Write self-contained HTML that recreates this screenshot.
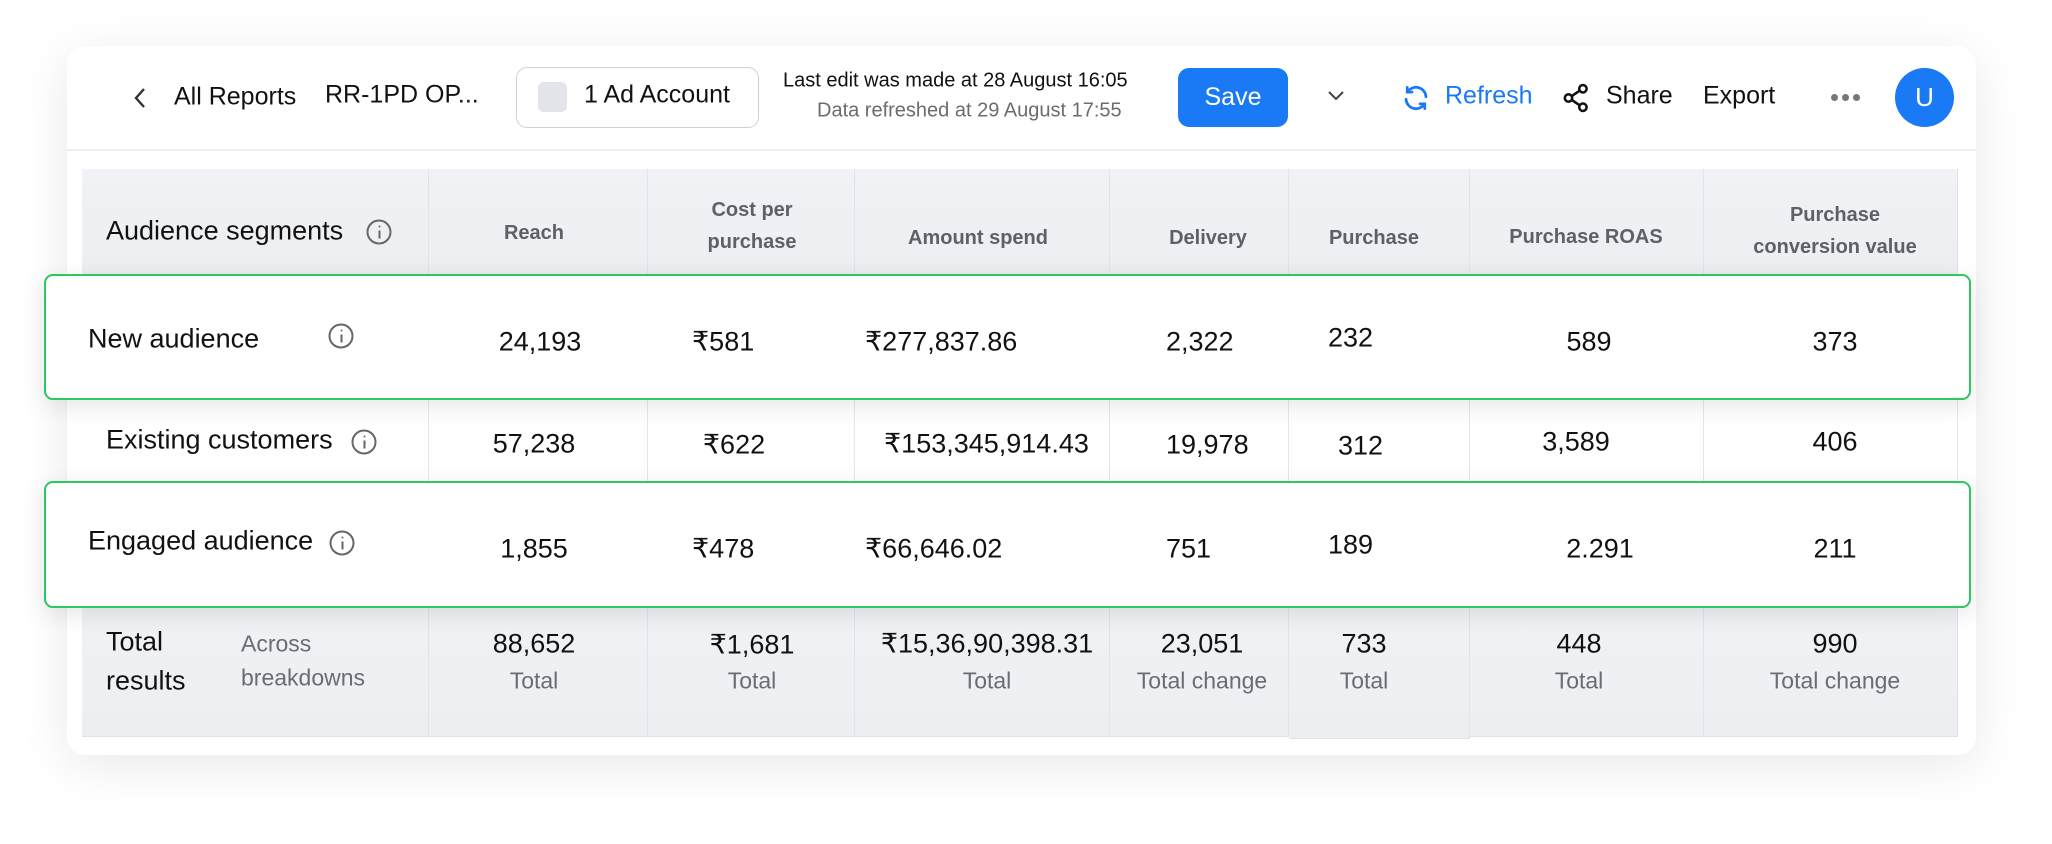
<!DOCTYPE html>
<html><head><meta charset="utf-8"><style>
*{margin:0;padding:0;box-sizing:border-box}
body{width:2052px;height:844px;background:#fff;font-family:"Liberation Sans",Arial,sans-serif;position:relative;overflow:hidden;color:#111}
.a{position:absolute;white-space:nowrap}
.c{transform:translate(-50%,-50%);text-align:center}
.l{transform:translateY(-50%)}
.card{position:absolute;left:67px;top:46px;width:1909px;height:709px;background:#fff;border-radius:18px;box-shadow:0 10px 50px rgba(0,0,0,0.09)}
.hd{position:absolute;background:linear-gradient(#f1f2f6,#eceef2);border-right:1.5px solid #e2e3e8}
.col{position:absolute;border-right:1.5px solid #e6e7eb}
.th{font-size:20px;font-weight:bold;color:#5f6066;line-height:32px}
.v{font-size:27px;color:#111}
.s{font-size:23px;color:#6b6c72}
.g{position:absolute;left:44px;width:1927px;background:#fff;border:2px solid #2cc95e;border-radius:9px;box-shadow:0 6px 24px rgba(0,0,0,0.10)}
.info{position:absolute;width:25px;height:25px;border:2px solid #666;border-radius:50%;transform:translate(-50%,-50%)}
.info:before{content:"";position:absolute;left:9.5px;top:4px;width:2.4px;height:2.4px;background:#666;border-radius:50%}
.info:after{content:"";position:absolute;left:9.6px;top:8.5px;width:2.2px;height:8px;background:#666}
</style></head><body>
<div class="card"></div>
<!-- header -->
<svg class="a" style="left:132px;top:86px" width="16" height="24" viewBox="0 0 16 24"><path d="M12 3 L4 12 L12 21" fill="none" stroke="#333" stroke-width="2.4"/></svg>
<div class="a l" style="left:174px;top:97px;font-size:25px">All Reports</div>
<div class="a l" style="left:325px;top:95px;font-size:25px">RR-1PD OP...</div>
<div class="a" style="left:516px;top:67px;width:243px;height:61px;border:1.5px solid #cfd1d6;border-radius:11px"></div>
<div class="a" style="left:538px;top:82px;width:29px;height:30px;background:#e4e5ea;border-radius:6px"></div>
<div class="a l" style="left:584px;top:95px;font-size:25px">1 Ad Account</div>
<div class="a l" style="left:783px;top:81px;font-size:20px">Last edit was made at 28 August 16:05</div>
<div class="a l" style="left:817px;top:111px;font-size:20px;color:#6b6c72">Data refreshed at 29 August 17:55</div>
<div class="a" style="left:1178px;top:68px;width:110px;height:59px;background:#1a7af5;border-radius:11px;color:#fff;font-size:25px;line-height:59px;text-align:center">Save</div>
<svg class="a" style="left:1326px;top:89px" width="20" height="14" viewBox="0 0 20 14"><path d="M3 3 L10 10 L17 3" fill="none" stroke="#444" stroke-width="2"/></svg>
<svg class="a" style="left:1401px;top:83px" width="30" height="30" viewBox="0 0 24 24"><g fill="none" stroke="#1a7af5" stroke-width="2.2" stroke-linecap="round"><path d="M20 11a8 8 0 0 0-14.5-4.2"/><path d="M5 3.5v3.8h3.8"/><path d="M4 13a8 8 0 0 0 14.5 4.2"/><path d="M19 20.5v-3.8h-3.8"/></g></svg>
<div class="a l" style="left:1445px;top:96px;font-size:25px;color:#1a7af5">Refresh</div>
<svg class="a" style="left:1562px;top:83px" width="28" height="30" viewBox="0 0 24 26"><g fill="none" stroke="#111" stroke-width="2.2"><circle cx="18" cy="5" r="3.2"/><circle cx="5.5" cy="13" r="3.2"/><circle cx="18" cy="21" r="3.2"/><path d="M8.3 11.3 L15.2 6.7 M8.3 14.7 L15.2 19.3"/></g></svg>
<div class="a l" style="left:1606px;top:96px;font-size:25px">Share</div>
<div class="a l" style="left:1703px;top:96px;font-size:25px">Export</div>
<div class="a" style="left:1831px;top:94px;width:7px;height:7px;border-radius:50%;background:#777;box-shadow:11px 0 0 #777,22px 0 0 #777"></div>
<div class="a" style="left:1895px;top:68px;width:59px;height:59px;border-radius:50%;background:#1a7af5;color:#fff;font-size:26px;line-height:59px;text-align:center">U</div>
<div class="a" style="left:67px;top:149px;width:1909px;height:2px;background:#ecedf0"></div>

<!-- table column header -->
<div class="hd" style="left:82px;top:169px;width:347px;height:106px"></div>
<div class="hd" style="left:429px;top:169px;width:219px;height:106px"></div>
<div class="hd" style="left:648px;top:169px;width:207px;height:106px"></div>
<div class="hd" style="left:855px;top:169px;width:255px;height:106px"></div>
<div class="hd" style="left:1110px;top:169px;width:179px;height:106px"></div>
<div class="hd" style="left:1289px;top:169px;width:181px;height:106px"></div>
<div class="hd" style="left:1470px;top:169px;width:234px;height:106px"></div>
<div class="hd" style="left:1704px;top:169px;width:254px;height:106px"></div>
<!-- white row column lines -->
<div class="col" style="left:82px;top:275px;width:347px;height:332px"></div>
<div class="col" style="left:429px;top:275px;width:219px;height:332px"></div>
<div class="col" style="left:648px;top:275px;width:207px;height:332px"></div>
<div class="col" style="left:855px;top:275px;width:255px;height:332px"></div>
<div class="col" style="left:1110px;top:275px;width:179px;height:332px"></div>
<div class="col" style="left:1289px;top:275px;width:181px;height:332px"></div>
<div class="col" style="left:1470px;top:275px;width:234px;height:332px"></div>
<div class="col" style="left:1704px;top:275px;width:254px;height:332px"></div>
<!-- total row -->
<div class="hd" style="left:82px;top:607px;width:347px;height:130px;border-bottom:1.5px solid #e2e3e8"></div>
<div class="hd" style="left:429px;top:607px;width:219px;height:130px;border-bottom:1.5px solid #e2e3e8"></div>
<div class="hd" style="left:648px;top:607px;width:207px;height:130px;border-bottom:1.5px solid #e2e3e8"></div>
<div class="hd" style="left:855px;top:607px;width:255px;height:130px;border-bottom:1.5px solid #e2e3e8"></div>
<div class="hd" style="left:1110px;top:607px;width:179px;height:130px;border-bottom:1.5px solid #e2e3e8"></div>
<div class="hd" style="left:1289px;top:607px;width:181px;height:132px;border-bottom:1.5px solid #e2e3e8"></div>
<div class="hd" style="left:1470px;top:607px;width:234px;height:130px;border-bottom:1.5px solid #e2e3e8"></div>
<div class="hd" style="left:1704px;top:607px;width:254px;height:130px;border-bottom:1.5px solid #e2e3e8"></div>

<div class="a l" style="left:106px;top:231px;font-size:27px">Audience segments</div>
<div class="info" style="left:379px;top:232px"></div>
<div class="a c th" style="left:534px;top:233px">Reach</div>
<div class="a c th" style="left:752px;top:226px">Cost per<br>purchase</div>
<div class="a c th" style="left:978px;top:238px">Amount spend</div>
<div class="a c th" style="left:1208px;top:238px">Delivery</div>
<div class="a c th" style="left:1374px;top:238px">Purchase</div>
<div class="a c th" style="left:1586px;top:237px">Purchase ROAS</div>
<div class="a c th" style="left:1835px;top:231px">Purchase<br>conversion value</div>

<!-- existing customers row -->
<div class="a l v" style="left:106px;top:440px">Existing customers</div>
<div class="info" style="left:364px;top:442px"></div>
<div class="a c v" style="left:534px;top:444px">57,238</div>
<div class="a c v" style="left:734px;top:445px">₹622</div>
<div class="a l v" style="left:884px;top:444px">₹153,345,914.43</div>
<div class="a l v" style="left:1166px;top:445px">19,978</div>
<div class="a l v" style="left:1338px;top:446px">312</div>
<div class="a c v" style="left:1576px;top:442px">3,589</div>
<div class="a c v" style="left:1835px;top:442px">406</div>

<!-- total row -->
<div class="a l v" style="left:106px;top:642px">Total</div>
<div class="a l v" style="left:106px;top:681px">results</div>
<div class="a l s" style="left:241px;top:644px">Across</div>
<div class="a l s" style="left:241px;top:678px">breakdowns</div>
<div class="a c v" style="left:534px;top:644px">88,652</div><div class="a c s" style="left:534px;top:681px">Total</div>
<div class="a c v" style="left:752px;top:645px">₹1,681</div><div class="a c s" style="left:752px;top:681px">Total</div>
<div class="a c v" style="left:987px;top:644px">₹15,36,90,398.31</div><div class="a c s" style="left:987px;top:681px">Total</div>
<div class="a c v" style="left:1202px;top:644px">23,051</div><div class="a c s" style="left:1202px;top:681px">Total change</div>
<div class="a c v" style="left:1364px;top:644px">733</div><div class="a c s" style="left:1364px;top:681px">Total</div>
<div class="a c v" style="left:1579px;top:644px">448</div><div class="a c s" style="left:1579px;top:681px">Total</div>
<div class="a c v" style="left:1835px;top:644px">990</div><div class="a c s" style="left:1835px;top:681px">Total change</div>

<!-- green row 1 -->
<div class="g" style="top:274px;height:126px"></div>
<div class="a l v" style="left:88px;top:339px">New audience</div>
<div class="info" style="left:341px;top:336px"></div>
<div class="a c v" style="left:540px;top:342px">24,193</div>
<div class="a l v" style="left:692px;top:342px">₹581</div>
<div class="a l v" style="left:865px;top:342px">₹277,837.86</div>
<div class="a l v" style="left:1166px;top:342px">2,322</div>
<div class="a l v" style="left:1328px;top:338px">232</div>
<div class="a c v" style="left:1589px;top:342px">589</div>
<div class="a c v" style="left:1835px;top:342px">373</div>

<!-- green row 2 -->
<div class="g" style="top:481px;height:127px"></div>
<div class="a l v" style="left:88px;top:541px">Engaged audience</div>
<div class="info" style="left:342px;top:543px"></div>
<div class="a c v" style="left:534px;top:549px">1,855</div>
<div class="a l v" style="left:692px;top:549px">₹478</div>
<div class="a l v" style="left:865px;top:549px">₹66,646.02</div>
<div class="a l v" style="left:1166px;top:549px">751</div>
<div class="a l v" style="left:1328px;top:545px">189</div>
<div class="a c v" style="left:1600px;top:549px">2.291</div>
<div class="a c v" style="left:1835px;top:549px">211</div>
</body></html>
